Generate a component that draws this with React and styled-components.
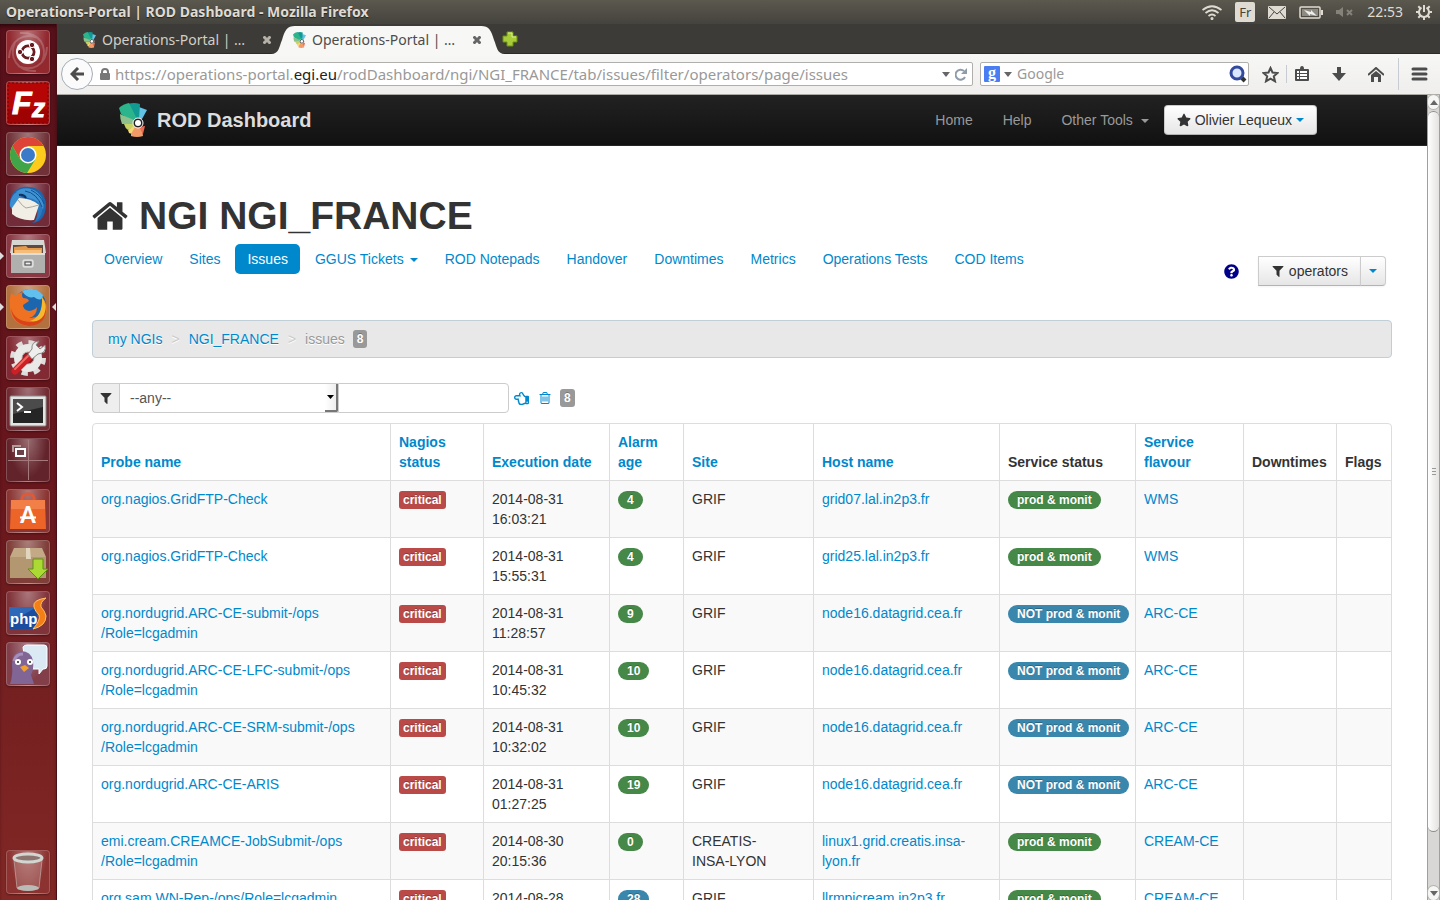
import React from "react";
import styled, { createGlobalStyle, css } from "styled-components";
import { FaStar, FaQuestionCircle, FaRegHandPointLeft } from "react-icons/fa";

const link = "#0088cc";
const uiFont = '"Noto Sans", "Open Sans", sans-serif';

const GlobalStyle = createGlobalStyle`
  * { box-sizing: border-box; }
  body {
    margin: 0;
    overflow: hidden;
    background: #fff;
    color: #333;
    font: 14px/20px "Liberation Sans", Helvetica, Arial, sans-serif;
  }
  a { color: ${link}; text-decoration: none; }
  button { font: inherit; cursor: pointer; }
  svg { display: block; flex: none; }
`;

/* ---------- desktop ---------- */

const Desktop = styled.div`
  display: flex;
  flex-direction: column;
  height: 100vh;
`;

const Panel = styled.header`
  display: flex;
  align-items: center;
  justify-content: space-between;
  flex: none;
  height: 24px;
  padding: 0 8px 0 6px;
  background: linear-gradient(#5b584e, #44433d);
  color: #dfdbd2;
  font: 14px/24px ${uiFont};
`;

const PanelTitle = styled.strong`
  font: 700 14px/24px ${uiFont};
  text-shadow: 0 1px 1px #222;
`;

const Indicators = styled.div`
  display: flex;
  align-items: center;
  gap: 13px;
`;

const Keyboard = styled.span`
  width: 20px;
  height: 20px;
  border-radius: 2px;
  background: #dfdbd2;
  color: #44433d;
  font-size: 13px;
  line-height: 20px;
  text-align: center;
`;

const Workspace = styled.div`
  display: flex;
  flex: 1;
  min-height: 0;
`;

const Launcher = styled.nav`
  display: flex;
  flex-direction: column;
  align-items: center;
  gap: 7px;
  flex: none;
  width: 57px;
  padding: 6px 1px 6px 0;
  background: linear-gradient(#57101a, #67161c 50%, #812825);
  border-right: 1px solid #4a0f17;
  box-shadow: inset 0 4px 4px -2px #2b060b;
  &> :last-child { margin-top: auto; }
`;

const Tile = styled.button`
  position: relative;
  flex: none;
  width: 44px;
  height: 44px;
  padding: 0;
  border: 1px solid rgba(255, 255, 255, 0.2);
  border-radius: 4px;
  background: radial-gradient(ellipse at 50% 0, rgba(255, 255, 255, 0.36), rgba(255, 255, 255, 0.04) 65%), ${(p) => p.$tone || "transparent"};
  box-shadow: 0 1px 2px rgba(0, 0, 0, 0.35);
  svg { margin: -1px; }
  ${(p) => p.$running && css`
    &::before {
      content: "";
      position: absolute;
      left: -7px;
      top: 17px;
      border: 4px solid transparent;
      border-left-color: #ddd;
      border-right: 0;
    }
  `}
  ${(p) => p.$focused && css`
    &::after {
      content: "";
      position: absolute;
      right: -7px;
      top: 17px;
      border: 4px solid transparent;
      border-right-color: #ddd;
      border-left: 0;
    }
  `}
`;

/* ---------- browser ---------- */

const Browser = styled.div`
  display: flex;
  flex-direction: column;
  flex: 1;
  min-width: 0;
`;

const TabStrip = styled.div`
  display: flex;
  align-items: flex-end;
  flex: none;
  height: 30px;
  padding-left: 16px;
  background: #3c3b37;
  border-bottom: 1px solid #2b2a27;
`;

const Tab = styled.div`
  position: relative;
  isolation: isolate;
  display: flex;
  align-items: center;
  width: 210px;
  height: 28px;
  margin-bottom: -1px;
  padding: 0 12px 0 10px;
  color: ${(p) => (p.$active ? "#4c4c4c" : "#d3cfc6")};
  font: 14px/28px ${uiFont};
  ${(p) => p.$active && css`background: linear-gradient(#f7f7f6, #f7f7f6) center / 188px 100% no-repeat;`}
`;

const TabTitle = styled.span`
  flex: 1;
  margin-left: 6px;
  white-space: nowrap;
`;

const TabEdge = styled.svg`
  position: absolute;
  z-index: -1;
  bottom: 0;
  ${(p) => (p.$right ? "left: 100%; margin-left: -12px;" : "right: 100%; margin-right: -12px;")}
`;

const PlainButton = styled.button`
  display: flex;
  align-items: center;
  justify-content: center;
  flex: none;
  padding: 0;
  border: 0;
  background: none;
  color: inherit;
`;

const CloseButton = styled(PlainButton)`
  color: ${(p) => (p.$active ? "#666" : "#b5b1a8")};
`;

const NewTab = styled(PlainButton)`
  align-self: center;
  margin-left: 9px;
`;

const Toolbar = styled.div`
  display: flex;
  align-items: center;
  flex: none;
  height: 41px;
  padding: 0 8px 0 4px;
  background: linear-gradient(#f7f7f6, #efeeed);
  border-bottom: 1px solid #aaa9a5;
  color: #4c4c4c;
`;

const Back = styled(PlainButton)`
  position: relative;
  z-index: 1;
  width: 32px;
  height: 32px;
  border: 1px solid #a3adb8;
  border-radius: 50%;
  background: #fbfbfb;
`;

const Field = styled.div`
  display: flex;
  align-items: center;
  height: 24px;
  border: 1px solid #b0afab;
  border-radius: 2px;
  background: #fff;
  color: #999;
  font: 14px/22px ${uiFont};
`;

const UrlField = styled(Field)`
  flex: 1;
  min-width: 0;
  gap: 5px;
  margin-left: -6px;
  padding: 0 4px 0 12px;
  font-size: 15px;
`;

const Url = styled.a`
  flex: 1;
  overflow: hidden;
  color: #999;
  white-space: nowrap;
  b { color: #222; font-weight: 400; }
`;

const SearchField = styled(Field)`
  width: 269px;
  margin-left: 7px;
  padding: 0 1px 0 3px;
  gap: 4px;
`;

const SearchInput = styled.input`
  flex: 1;
  min-width: 0;
  padding: 0 0 0 1px;
  border: 0;
  outline: 0;
  background: none;
  font: 14px/20px ${uiFont};
  &::placeholder { color: #999; opacity: 1; }
`;

const Tools = styled.div`
  display: flex;
  align-items: center;
  gap: 22px;
  margin-left: 13px;
`;

const ToolGroup = styled.div`
  display: flex;
  align-items: center;
  gap: 7px;
`;

const MenuGroup = styled(ToolGroup)`
  margin-left: -8px;
`;

const Divider = styled.span`
  width: 1px;
  height: ${(p) => (p.$tall ? 32 : 18)}px;
  background: #c6ccd2;
`;

const Viewport = styled.div`
  display: flex;
  flex: 1;
  min-height: 0;
`;

const Page = styled.div`
  flex: 1;
  min-width: 0;
  overflow: hidden;
  background: #fff;
`;

const ScrollBar = styled.div`
  display: flex;
  flex-direction: column;
  flex: none;
  width: 13px;
  border: solid #a19f9b;
  border-width: 0 1px;
  background: #d8d7d5;
`;

const ScrollEnd = styled(PlainButton)`
  height: 14px;
  border-radius: 6px;
  background: #f6f6f5;
  box-shadow: 0 0 0 1px #b5b3af;
`;

const Thumb = styled.div`
  display: flex;
  flex-direction: column;
  align-items: center;
  justify-content: center;
  gap: 2px;
  flex: 1;
  margin: 2px 0 54px;
  border: solid #8f8d89;
  border-width: 1px 0;
  border-radius: 6px;
  background: linear-gradient(90deg, #fff, #e3e2e0);
  i { width: 4px; height: 1px; background: #999; }
`;

/* ---------- dashboard ---------- */

const Navbar = styled.header`
  display: flex;
  align-items: center;
  justify-content: space-between;
  height: 51px;
  padding: 0 110px 0 62px;
  background: linear-gradient(#222, #111);
  border-bottom: 1px solid #252525;
`;

const Brand = styled.a`
  display: flex;
  align-items: center;
  gap: 10px;
  color: #ddd;
  font-size: 20px;
  font-weight: 700;
`;

const NavLinks = styled.nav`
  display: flex;
  align-items: center;
  gap: 30px;
  a { color: #999; }
`;

const Caret = styled.span`
  display: inline-block;
  margin-left: ${(p) => p.$gap || 0}px;
  vertical-align: middle;
  border: 4px solid transparent;
  border-top-color: ${(p) => p.$color || link};
  border-bottom: 0;
`;

const Button = styled.button`
  display: flex;
  align-items: center;
  gap: 4px;
  height: 30px;
  padding: 0 12px;
  border: 1px solid #ccc;
  border-bottom-color: #b3b3b3;
  border-radius: ${(p) => p.$radius || "4px"};
  background: linear-gradient(#fff, #e6e6e6);
  color: #333;
  box-shadow: 0 1px 2px rgba(0, 0, 0, 0.05);
`;

const UserButton = styled(Button)`
  margin-left: -15px;
`;

const Main = styled.main`
  padding: 50px 35px 0;
`;

const Title = styled.h1`
  display: flex;
  align-items: center;
  gap: 11px;
  margin: 0 0 8px;
  font-size: 39px;
  line-height: 40px;
`;

const SubNav = styled.div`
  display: flex;
  justify-content: space-between;
  align-items: flex-start;
  margin-bottom: 34px;
`;

const Pills = styled.nav`
  display: flex;
  gap: 3px;
`;

const Pill = styled.a`
  padding: 5px 12px;
  border-radius: 5px;
  white-space: nowrap;
  ${(p) => p.$active && css`background: ${link}; color: #fff;`}
`;

const Scope = styled.div`
  display: flex;
  align-items: center;
  margin: 12px 6px 0 0;
  color: #00008b;
  &> svg { margin-right: 19px; }
`;

const ScopeToggle = styled(Button)`
  margin-left: -1px;
  padding: 0 8px;
`;

const Breadcrumb = styled.ol`
  display: flex;
  align-items: center;
  gap: 9px;
  height: 38px;
  margin: 0 0 25px;
  padding: 0 15px;
  list-style: none;
  border: 1px solid #c0ced8;
  border-radius: 4px;
  background: #e8e8e8;
  color: #999;
  text-shadow: 0 1px 0 #fff;
`;

const Sep = styled.li`
  color: #ccc;
`;

const Current = styled.li`
  display: flex;
  align-items: center;
  gap: 8px;
`;

const Label = styled.span`
  display: inline-block;
  padding: 2px ${(p) => (p.$round ? 9 : 4)}px;
  border-radius: ${(p) => (p.$round ? 9 : 3)}px;
  background: ${(p) => p.$bg || "#999"};
  color: #fff;
  font-size: 12px;
  font-weight: 700;
  line-height: 14px;
  text-shadow: 0 -1px 0 rgba(0, 0, 0, 0.25);
  white-space: nowrap;
`;

const Filter = styled.form`
  display: flex;
  align-items: center;
  gap: 8px;
  margin-bottom: 10px;
`;

const FilterFields = styled.div`
  display: flex;
  margin-right: -3px;
`;

const AddOn = styled.label`
  display: flex;
  align-items: center;
  justify-content: center;
  width: 27px;
  height: 30px;
  border: 1px solid #ccc;
  border-right: 0;
  border-radius: 4px 0 0 4px;
  background: #eee;
`;

const SelectBox = styled.div`
  display: flex;
  width: 219px;
  height: 30px;
  border: 1px solid #ccc;
  border-right: 0;
  background: #fff;
`;

const Select = styled.select`
  flex: 1;
  padding: 0 10px;
  appearance: none;
  border: 0;
  outline: 0;
  background: none;
  color: #555;
  font: inherit;
`;

const SelectArrow = styled.span`
  display: flex;
  align-items: center;
  justify-content: center;
  width: 13px;
  margin-left: -13px;
  border: solid #777;
  border-width: 0 2px 2px 0;
  border-radius: 0 0 2px 0;
  background: linear-gradient(90deg, #fff, #eee);
  pointer-events: none;
`;

const TextInput = styled.input`
  width: 171px;
  height: 30px;
  padding: 4px 6px;
  border: 1px solid #ccc;
  border-radius: 0 4px 4px 0;
  font: inherit;
`;

const IconButton = styled(PlainButton)`
  width: 15px;
  color: ${link};
`;

const Table = styled.table`
  width: 100%;
  table-layout: fixed;
  border: 1px solid #ddd;
  border-collapse: separate;
  border-spacing: 0;
  border-radius: 4px;
  th, td {
    padding: 8px;
    border-left: 1px solid #ddd;
    text-align: left;
    white-space: nowrap;
  }
  th { vertical-align: bottom; }
  td {
    height: 57px;
    border-top: 1px solid #ddd;
    vertical-align: top;
  }
  tr > :first-child { border-left: 0; }
  tbody tr:nth-child(odd) td { background: #f9f9f9; }
`;

const Col = styled.col`
  width: ${(p) => p.$w}px;
`;

/* ---------- drawings ---------- */

const FA = {
  home: "M1472 992v480q0 26-19 45t-45 19h-384v-384h-256v384h-384q-26 0-45-19t-19-45v-480q0-1 .5-3t.5-3l575-474 575 474q1 2 1 6zm223-69l-62 74q-8 9-21 11h-3q-13 0-21-7l-692-577-692 577q-12 8-24 7-13-2-21-11l-62-74q-8-10-7-23.5t11-21.5l719-599q32-26 76-26t76 26l244 204v-195q0-14 9-23t23-9h192q14 0 23 9t9 23v408l219 182q10 8 11 21.5t-7 23.5z",
  filter: "M1595 295q17 41-14 70l-493 493v742q0 42-39 59-13 5-25 5-27 0-45-19l-256-256q-19-19-19-45v-486l-493-493q-31-29-14-70 17-39 59-39h1280q42 0 59 39z",
  trash: "M704 736v576q0 14-9 23t-23 9h-64q-14 0-23-9t-9-23v-576q0-14 9-23t23-9h64q14 0 23 9t9 23zm256 0v576q0 14-9 23t-23 9h-64q-14 0-23-9t-9-23v-576q0-14 9-23t23-9h64q14 0 23 9t9 23zm256 0v576q0 14-9 23t-23 9h-64q-14 0-23-9t-9-23v-576q0-14 9-23t23-9h64q14 0 23 9t9 23zm128 724v-948h-896v948q0 22 7 40.5t14.5 27 10.5 8.5h832q3 0 10.5-8.5t14.5-27 7-40.5zm-672-1076h448l-48-117q-7-9-17-11h-317q-10 2-17 11zm928 32v64q0 14-9 23t-23 9h-96v948q0 83-47 143.5t-113 60.5h-832q-66 0-113-58.5t-47-141.5v-952h-96q-14 0-23-9t-9-23v-64q0-14 9-23t23-9h309l70-167q15-37 54-63t79-26h320q40 0 79 26t54 63l70 167h309q14 0 23 9t9 23z",
};

const Fa = ({ name, size = 14, box = "0 0 1792 1792" }) => (
  <svg width={size} height={size} viewBox={box} fill="currentColor" aria-hidden="true"><path d={FA[name]} /></svg>
);

const EgiLogo = ({ w = 28, h = 34 }) => (
  <svg width={w} height={h} viewBox="0 0 28 34" aria-hidden="true">
    <path d="M20 4L28 7 23 16H18Z" fill="#62c3e6" />
    <path d="M9 1Q15-1 21 1L20 16 15 17Z" fill="#119a92" />
    <path d="M0 5Q4 1 10 0L18 16 13 18 2 11Z" fill="#2bb58c" />
    <path d="M1 11L15 17 14 21 3 21Q1 16 1 11Z" fill="#8cc08c" />
    <path d="M5 21H14L16 23 9 27Q6 25 5 21Z" fill="#c6d264" />
    <path d="M9 27L16 22 17 25 13 31 10 30Z" fill="#f5d974" />
    <path d="M16 24L23 25 24 33Q18 35 12 33V31Z" fill="#f29a68" />
    <path d="M20 24L26 23 24 31Z" fill="#ee6a50" />
    <circle cx="19" cy="20" r="5" fill="#222" stroke="#fff" strokeWidth="1" />
    <circle cx="19" cy="20" r="3" fill="#fff" />
  </svg>
);

const CloseIcon = () => (
  <svg width="8" height="8" viewBox="0 0 8 8" stroke="currentColor" strokeWidth="3"><path d="M0.500 0.500l7 7M7.500 0.500l-7 7" /></svg>
);

const Triangle = ({ up }) => (
  <svg width="8" height="5" viewBox="0 0 8 5" fill="#666"><path d={up ? "M0 5L4 0 8 5Z" : "M0 0H8L4 5Z"} /></svg>
);

const UbuntuIcon = () => (
  <svg width="44" height="44" viewBox="0 0 44 44">
    <g fill="none" stroke="#fff" strokeOpacity=".2" strokeWidth="2">
      <path d="M3 28C4 10 18 2 32 8M14 3C34 2 42 16 36 32M41 17C40 36 26 42 12 36M30 41C12 42 2 28 9 12" />
    </g>
    <circle cx="22" cy="22" r="12" fill="#fff" />
    <circle cx="22" cy="22" r="6" fill="none" stroke="#6b1b1f" strokeWidth="3" />
    <path d="M22 22L12 22M22 22L27 13M22 22L27 31" stroke="#fff" strokeWidth="1.500" />
    <circle cx="22" cy="22" r="4.500" fill="#fff" />
    <g fill="#6b1b1f" stroke="#fff"><circle cx="14" cy="22" r="2.700" /><circle cx="26" cy="15" r="2.700" /><circle cx="26" cy="29" r="2.700" /></g>
  </svg>
);

const FileZillaIcon = () => (
  <svg width="44" height="44" viewBox="0 0 44 44">
    <rect x="2" y="2" width="40" height="40" fill="#b50505" stroke="#5d0a0c" strokeDasharray="2 2" />
    <path d="M2 28H42V42H2Z" fill="#8f0000" opacity=".6" />
    <text x="6" y="33" fill="#fff" stroke="#fff" fontFamily="Liberation Sans" fontWeight="700" fontStyle="italic" fontSize="32">F</text>
    <text x="26" y="36" fill="#fff" stroke="#fff" fontFamily="Liberation Sans" fontWeight="700" fontStyle="italic" fontSize="26">z</text>
  </svg>
);

const ChromeIcon = () => (
  <svg width="44" height="44" viewBox="0 0 44 44">
    <circle cx="22" cy="23" r="18" fill="#fccb1c" />
    <path d="M6.400 14A18 18 0 0 1 37.600 14H22L14 27Z" fill="#dd4437" />
    <path d="M6.400 14A18 18 0 0 0 21 41L29 28 14.200 27.500Z" fill="#3fa548" />
    <circle cx="22" cy="23" r="8.500" fill="#fff" />
    <circle cx="22" cy="23" r="7" fill="#3b7ac8" />
  </svg>
);

const ThunderbirdIcon = () => (
  <svg width="44" height="44" viewBox="0 0 44 44">
    <path d="M4 24C2 12 12 2 23 4C35 4 43 16 39 29C37 36 32 40 26 40C32 36 34 30 32 24L12 12Z" fill="#1e65ae" />
    <path d="M19 8C33 8 38 18 36 29Q34 36 29 39C33 30 33 20 24 16Z" fill="#2b78bf" />
    <path d="M10 9C14 5 24 3 31 9C36 13 39 20 37 27C35 20 30 16 22 15C18 14 15 12 10 9Z" fill="#3f93d3" />
    <path d="M4 23C4 15 8 9 14 8C12 11 13 13 17 15L9 22 6 27Z" fill="#3b8ed0" />
    <path d="M6 25L13 15Q25 15 33 22L28 37Q14 38 6 31Z" fill="#f1eee6" />
    <path d="M12 17Q17 24 20 25Q26 24 33 22" fill="none" stroke="#aaa69b" />
    <path d="M19 8Q31 10 36 24M25 7Q35 12 38 21" fill="none" stroke="#134e8f" />
    <path d="M13 12Q18 11 20 15" fill="none" stroke="#0c3562" strokeWidth="2" />
  </svg>
);

const FilesIcon = () => (
  <svg width="44" height="44" viewBox="0 0 44 44">
    <path d="M6 6H38L40 19H4Z" fill="#d6d6d3" />
    <path d="M7 11H37V19H7Z" fill="#5c4b42" />
    <path d="M8 13L20 12 22 14H36V19H8Z" fill="#e89a4b" />
    <path d="M9 16H35V19H9Z" fill="#f5bd78" />
    <path d="M5 19H39V39H5Z" fill="#b0b0ae" />
    <path d="M5 19H39V21H5Z" fill="#dededb" />
    <rect x="17" y="26" width="10" height="7" rx="1" fill="#c9c9c7" stroke="#eee" />
    <rect x="19" y="28" width="6" height="3" fill="#eee" stroke="#444" />
  </svg>
);

const FirefoxIcon = () => (
  <svg width="44" height="44" viewBox="0 0 44 44">
    <circle cx="24" cy="20" r="16" fill="#1c66b0" />
    <path d="M16 6Q28 0 37 10Q36 18 28 12Q21 14 16 6Z" fill="#61c0ee" />
    <path d="M5 8Q8 11 11 10Q14 7 17 7Q15 10 17 13Q22 13 23 16L17 20Q17 25 23 26Q29 25 31 22Q31 31 23 33Q34 34 38 22Q38 15 36 12Q43 20 40 29Q35 41 22 41Q5 39 4 23Q3 15 5 8Z" fill="#ee7222" />
    <path d="M5 23Q8 36 24 37Q38 35 40 22Q41 40 23 41Q6 39 5 23Z" fill="#d9431a" />
    <path d="M36 12Q42 20 38 30Q33 38 24 36Q37 32 36 12Z" fill="#f8b82c" />
  </svg>
);

const SettingsIcon = () => (
  <svg width="44" height="44" viewBox="0 0 44 44">
    <circle cx="22" cy="22" r="15" fill="none" stroke="#dddddb" strokeWidth="6" strokeDasharray="6 5.780" />
    <circle cx="22" cy="22" r="10" fill="none" stroke="#e9e9e7" strokeWidth="8" />
    <circle cx="22" cy="22" r="6" fill="#861f27" stroke="#b3b3b1" />
    <path d="M9 35L24 20" stroke="#cd1f24" strokeWidth="7" strokeLinecap="round" />
    <path d="M9 33L22 20" stroke="#ef6b64" strokeWidth="2" strokeLinecap="round" />
    <path d="M22 18L26 13Q25 6 33 5L30 9 34 13 39 9Q41 17 32 18L26 23Z" fill="#eeeeec" stroke="#888" />
  </svg>
);

const TerminalIcon = () => (
  <svg width="44" height="44" viewBox="0 0 44 44">
    <rect x="4" y="9" width="36" height="30" rx="1" fill="#e4e4e2" stroke="#8c8c8a" />
    <rect x="7" y="12" width="30" height="24" fill="#252525" />
    <path d="M7 12H37V20L7 27Z" fill="#4b4b4b" />
    <path d="M11 16L16 20 11 24M18 25H25" fill="none" stroke="#fff" strokeWidth="2" />
  </svg>
);

const WorkspaceIcon = () => (
  <svg width="44" height="44" viewBox="0 0 44 44" fill="none">
    <path d="M2 22.500H42M22.500 2V42" stroke="#a5787c" />
    <path d="M7 14V8H15" stroke="#b79a9c" strokeWidth="2" />
    <rect x="10" y="11" width="9" height="7" fill="#6b4247" stroke="#fff" strokeWidth="2" />
  </svg>
);

const SoftwareIcon = () => (
  <svg width="44" height="44" viewBox="0 0 44 44">
    <path d="M16 14V9Q17 5 22 5Q27 5 28 9V14" fill="none" stroke="#dd5a39" strokeWidth="3" />
    <path d="M5 11H39L40 40H4Z" fill="#ec6427" />
    <path d="M5 11H39V20H5Z" fill="#f58a55" opacity=".7" />
    <text x="22" y="34" textAnchor="middle" fill="#fff" fontFamily="Lato" fontWeight="900" fontSize="22">A</text>
    <path d="M14 28.500H30" stroke="#fff" strokeWidth="2" />
  </svg>
);

const UpdaterIcon = () => (
  <svg width="44" height="44" viewBox="0 0 44 44">
    <path d="M8 8H36L40 17H4Z" fill="#c3a985" />
    <path d="M4 17H40V38H4Z" fill="#b29770" />
    <path d="M20 8H24L25 19H20Z" fill="#e2d5be" />
    <path d="M27 19H37V29H42L32 39 22 29H27Z" fill="#aada33" stroke="#5f9110" />
  </svg>
);

const PhpStormIcon = () => (
  <svg width="44" height="44" viewBox="0 0 44 44">
    <path d="M3 16H31V38H3Z" fill="#1a4c9f" />
    <path d="M3 16H31L3 32Z" fill="#3c7bc9" opacity=".6" />
    <path d="M40 7Q26 9 28 16Q29 20 33 24Q35 29 27 38Q40 35 40 25Q39 20 35 16Q34 11 40 7Z" fill="#f57f17" stroke="#ffc163" />
    <text x="4" y="33" fill="#fff" fontFamily="Liberation Sans" fontWeight="700" fontSize="15">php</text>
  </svg>
);

const PidginIcon = () => (
  <svg width="44" height="44" viewBox="0 0 44 44">
    <path d="M17 5Q18 3 21 3H38Q41 3 41 6V24Q41 27 38 27H37L33 32V27H20Z" fill="#dbe9f5" stroke="#fff" />
    <path d="M4 42Q7 34 6 22Q6 11 15 9Q25 9 27 19Q28 27 25 33L28 42Z" fill="#806595" />
    <path d="M8 19Q10 12 17 12" fill="none" stroke="#a78fba" strokeWidth="3" />
    <g fill="#fff"><circle cx="12" cy="20" r="3" /><circle cx="24" cy="20" r="3" /></g>
    <g fill="#222"><circle cx="12" cy="20" r="1" /><circle cx="24" cy="20" r="1" /></g>
    <path d="M14 25L19 23 23 26 18 30Z" fill="#f3a02b" />
  </svg>
);

const TrashIcon = () => (
  <svg width="44" height="44" viewBox="0 0 44 44">
    <path d="M8 9H36L33 39Q22 43 11 39Z" fill="#c9a09c" opacity=".35" />
    <path d="M8 10L11 38M36 10L33 38" stroke="#c5aaa6" opacity=".7" />
    <ellipse cx="22" cy="38" rx="11" ry="3" fill="#b9bcb6" />
    <ellipse cx="22" cy="8" rx="14" ry="4" fill="#8c7571" stroke="#d3d5d0" strokeWidth="3" />
  </svg>
);

const apps = [
  ["Dash", UbuntuIcon, "#8c2027"],
  ["FileZilla", FileZillaIcon, "#a50d0d"],
  ["Chrome", ChromeIcon, "#6a2a30"],
  ["Thunderbird", ThunderbirdIcon, "#6b2231"],
  ["Files", FilesIcon, "#85303c", true],
  ["Firefox", FirefoxIcon, "#b06b37", true, true],
  ["Settings", SettingsIcon, "#7d212b"],
  ["Terminal", TerminalIcon, "#6b222a"],
  ["Workspaces", WorkspaceIcon, "#5d1a22"],
  ["Software Centre", SoftwareIcon, "#852d2b"],
  ["Updater", UpdaterIcon, "#7a3630"],
  ["PhpStorm", PhpStormIcon, "#7b2b31"],
  ["Pidgin", PidginIcon, "#7d3743"],
  ["Trash", TrashIcon, "#872a29"],
];

const green = "#468847";
const blue = "#3a87ad";
const rows = [
  [["org.nagios.GridFTP-Check"], "2014-08-31", "16:03:21", 4, ["GRIF"], ["grid07.lal.in2p3.fr"], true, "WMS"],
  [["org.nagios.GridFTP-Check"], "2014-08-31", "15:55:31", 4, ["GRIF"], ["grid25.lal.in2p3.fr"], true, "WMS"],
  [["org.nordugrid.ARC-CE-submit-/ops", "/Role=lcgadmin"], "2014-08-31", "11:28:57", 9, ["GRIF"], ["node16.datagrid.cea.fr"], false, "ARC-CE"],
  [["org.nordugrid.ARC-CE-LFC-submit-/ops", "/Role=lcgadmin"], "2014-08-31", "10:45:32", 10, ["GRIF"], ["node16.datagrid.cea.fr"], false, "ARC-CE"],
  [["org.nordugrid.ARC-CE-SRM-submit-/ops", "/Role=lcgadmin"], "2014-08-31", "10:32:02", 10, ["GRIF"], ["node16.datagrid.cea.fr"], false, "ARC-CE"],
  [["org.nordugrid.ARC-CE-ARIS"], "2014-08-31", "01:27:25", 19, ["GRIF"], ["node16.datagrid.cea.fr"], false, "ARC-CE"],
  [["emi.cream.CREAMCE-JobSubmit-/ops", "/Role=lcgadmin"], "2014-08-30", "20:15:36", 0, ["CREATIS-", "INSA-LYON"], ["linux1.grid.creatis.insa-", "lyon.fr"], true, "CREAM-CE"],
  [["org.sam.WN-Rep-/ops/Role=lcgadmin"], "2014-08-28", "", 28, ["GRIF"], ["llrmpicream.in2p3.fr"], true, "CREAM-CE"],
];

const columns = [
  [["Probe name"], true],
  [["Nagios", "status"], true],
  [["Execution date"], true],
  [["Alarm", "age"], true],
  [["Site"], true],
  [["Host name"], true],
  [["Service status"], false],
  [["Service", "flavour"], true],
  [["Downtimes"], false],
  [["Flags"], false],
];
const widths = [93, 126, 74, 130, 186, 136, 108, 93, 55];
const pills = ["Overview", "Sites", "Issues", "GGUS Tickets", "ROD Notepads", "Handover", "Downtimes", "Metrics", "Operations Tests", "COD Items"];

const Lines = ({ of }) => of.map((text, i) => <React.Fragment key={i}>{i > 0 && <br />}{text}</React.Fragment>);

function TopPanel() {
  return (
    <Panel>
      <PanelTitle>Operations-Portal | ROD Dashboard - Mozilla Firefox</PanelTitle>
      <Indicators>
        <svg width="20" height="15" viewBox="0 0 20 15" fill="none" stroke="#dfdbd2" strokeWidth="1.700">
          <path d="M0.500 5Q10-2.500 19.500 5M3.500 8Q10 2.500 16.500 8M6.500 11Q10 8 13.500 11" /><circle cx="10" cy="13.500" r=".7" />
        </svg>
        <Keyboard>Fr</Keyboard>
        <svg width="18" height="13" viewBox="0 0 18 13">
          <rect width="18" height="13" rx="1" fill="#dfdbd2" />
          <path d="M1 1L9 8 17 1M1 12L6 6M17 12L12 6" fill="none" stroke="#44433d" />
        </svg>
        <svg width="24" height="13" viewBox="0 0 24 13">
          <rect x="1" y="1" width="20" height="11" rx="1" fill="none" stroke="#dfdbd2" strokeWidth="1.500" />
          <rect x="3" y="3" width="16" height="7" fill="#8d8a82" />
          <path d="M22 4H24V9H22Z" fill="#dfdbd2" />
          <path d="M5 4L12 6 12 4 18 10 11 8 11 10Z" fill="#eee" />
        </svg>
        <svg width="18" height="12" viewBox="0 0 18 12">
          <path d="M0 4H3L7 1V11L3 8H0Z" fill="#85827a" />
          <path d="M11 4L16 9M16 4L11 9" stroke="#85827a" strokeWidth="2" />
        </svg>
        <time>22:53</time>
        <svg width="16" height="16" viewBox="0 0 16 16" fill="none" stroke="#dfdbd2" strokeWidth="2">
          <path d="M5.500 3.700A5 5 0 1 0 10.500 3.700M8 1V8" />
          <path d="M0 8H3M13 8H16M8 13V16M2.300 2.300L4.500 4.500M13.700 2.300L11.500 4.500M2.300 13.700L4.500 11.500M13.700 13.700L11.500 11.500" />
        </svg>
      </Indicators>
    </Panel>
  );
}

function BrowserTab({ active }) {
  return (
    <Tab $active={active}>
      <EgiLogo w={13} h={16} />
      <TabTitle>Operations-Portal | …</TabTitle>
      <CloseButton $active={active} aria-label="Close tab"><CloseIcon /></CloseButton>
      {active && (
        <>
          <TabEdge width="24" height="28" viewBox="0 0 24 28"><path d="M0 28C8 28 8 21 11 14C14 4 16 0 24 0V28Z" fill="#f7f7f6" /></TabEdge>
          <TabEdge $right width="24" height="28" viewBox="0 0 24 28"><path d="M0 0C8 0 10 4 13 14C16 21 16 28 24 28H0Z" fill="#f7f7f6" /></TabEdge>
        </>
      )}
    </Tab>
  );
}

function BrowserToolbar() {
  return (
    <Toolbar>
      <Back aria-label="Back">
        <svg width="14" height="14" viewBox="0 0 14 14" fill="none" stroke="#4c4c4c" strokeWidth="3"><path d="M8 1L2 7L8 13M2 7H14" /></svg>
      </Back>
      <UrlField>
        <svg width="10" height="12" viewBox="0 0 10 12"><path d="M2 6V4Q2 1 5 1Q8 1 8 4V6" fill="none" stroke="#777" strokeWidth="2" /><rect y="5" width="10" height="7" rx="1" fill="#777" /></svg>
        <Url href="#">https://operations-portal.<b>egi.eu</b>/rodDashboard/ngi/NGI_FRANCE/tab/issues/filter/operators/page/issues</Url>
        <Triangle />
        <svg width="13" height="13" viewBox="0 0 13 13"><path d="M10 9A5 5 0 1 1 9 3" fill="none" stroke="#8f9dab" strokeWidth="2" /><path d="M12 0V6H6Z" fill="#8f9dab" /></svg>
      </UrlField>
      <SearchField>
        <svg width="16" height="16" viewBox="0 0 16 16"><rect width="16" height="16" rx="1" fill="#4a7df2" /><text x="8" y="12" textAnchor="middle" fill="#fff" fontFamily="Liberation Serif" fontWeight="700" fontSize="16">g</text></svg>
        <Triangle />
        <SearchInput aria-label="Search" placeholder="Google" />
        <svg width="18" height="18" viewBox="0 0 18 18"><path d="M11 11L16 16" stroke="#333" strokeWidth="4" /><circle cx="8" cy="8" r="6" fill="#dce8ff" stroke="#344a9c" strokeWidth="3" /></svg>
      </SearchField>
      <Tools>
        <ToolGroup>
          <PlainButton aria-label="Bookmark"><svg width="17" height="17" viewBox="0 0 17 17" fill="none" stroke="#4c4c4c" strokeWidth="2"><path d="M8.500 2L10.500 6.500 15.500 7 11.800 10.300 13 15.300 8.500 12.700 4 15.300 5.200 10.300 1.500 7 6.500 6.500Z" /></svg></PlainButton>
          <Divider />
          <PlainButton aria-label="Bookmarks menu"><svg width="16" height="16" viewBox="0 0 16 16"><path d="M2 3H6Q6 0 8 0Q10 0 10 3H14Q15 3 15 4V14Q15 15 14 15H2Q1 15 1 14V4Q1 3 2 3Z" fill="#4c4c4c" /><path d="M3 6H5M6 6H13M3 9H5M6 9H13M3 12H5M6 12H13" stroke="#fff" strokeWidth="2" /></svg></PlainButton>
        </ToolGroup>
        <PlainButton aria-label="Downloads"><svg width="14" height="14" viewBox="0 0 14 14" fill="#4c4c4c"><path d="M5 0H9V6H14L7 14 0 6H5Z" /></svg></PlainButton>
        <PlainButton aria-label="Home"><svg width="16" height="15" viewBox="0 0 16 15"><path d="M0 8L8 1L16 8" fill="none" stroke="#4c4c4c" strokeWidth="2" /><path d="M3 8L8 4 13 8V15H10V10H6V15H3Z" fill="#4c4c4c" /></svg></PlainButton>
        <MenuGroup>
          <Divider $tall />
          <PlainButton aria-label="Menu"><svg width="26" height="14" viewBox="0 0 26 14" stroke="#4c4c4c" strokeWidth="3" strokeLinecap="round"><path d="M7 2H20M7 7H20M7 12H20" /></svg></PlainButton>
        </MenuGroup>
      </Tools>
    </Toolbar>
  );
}

function IssuesTable() {
  return (
    <Table>
      <colgroup><col />{widths.map((w, i) => <Col key={i} $w={w} />)}</colgroup>
      <thead>
        <tr>{columns.map(([lines, sortable]) => (
          <th key={lines[0] + lines.length} scope="col">{sortable ? <a href="#"><Lines of={lines} /></a> : <Lines of={lines} />}</th>
        ))}</tr>
      </thead>
      <tbody>
        {rows.map(([probe, date, time, age, site, host, prod, flavour], i) => (
          <tr key={i}>
            <td><a href="#"><Lines of={probe} /></a></td>
            <td><Label $bg="#b94a48">critical</Label></td>
            <td>{date}<br />{time}</td>
            <td><Label $round $bg={age > 20 ? blue : green}>{age}</Label></td>
            <td><Lines of={site} /></td>
            <td><a href="#"><Lines of={host} /></a></td>
            <td><Label $round $bg={prod ? green : blue}>{prod ? "prod & monit" : "NOT prod & monit"}</Label></td>
            <td><a href="#">{flavour}</a></td>
            <td />
            <td />
          </tr>
        ))}
      </tbody>
    </Table>
  );
}

function Dashboard() {
  return (
    <Page>
      <Navbar>
        <Brand href="#"><EgiLogo />ROD Dashboard</Brand>
        <NavLinks>
          <a href="#">Home</a>
          <a href="#">Help</a>
          <a href="#">Other Tools <Caret $gap={4} $color="#999" /></a>
          <UserButton><FaStar size={14} />Olivier Lequeux<Caret /></UserButton>
        </NavLinks>
      </Navbar>
      <Main>
        <Title><Fa name="home" size={36} box="64 64 1664 1664" />NGI NGI_FRANCE</Title>
        <SubNav>
          <Pills>
            {pills.map((name) => (
              <Pill key={name} href="#" $active={name === "Issues"}>{name}{name === "GGUS Tickets" && <Caret $gap={6} />}</Pill>
            ))}
          </Pills>
          <Scope>
            <FaQuestionCircle size={15} />
            <Button $radius="0"><Fa name="filter" />operators</Button>
            <ScopeToggle aria-label="Choose scope" $radius="0 4px 4px 0"><Caret /></ScopeToggle>
          </Scope>
        </SubNav>
        <Breadcrumb>
          <li><a href="#">my NGIs</a></li>
          <Sep>&gt;</Sep>
          <li><a href="#">NGI_FRANCE</a></li>
          <Sep>&gt;</Sep>
          <Current>issues <Label>8</Label></Current>
        </Breadcrumb>
        <Filter>
          <FilterFields>
            <AddOn htmlFor="field" aria-label="Filter by"><Fa name="filter" /></AddOn>
            <SelectBox>
              <Select id="field"><option>--any--</option></Select>
              <SelectArrow><svg width="7" height="4" viewBox="0 0 7 4"><path d="M0 0H7L3.500 4Z" /></svg></SelectArrow>
            </SelectBox>
            <TextInput aria-label="Filter value" />
          </FilterFields>
          <IconButton type="button" aria-label="Apply"><FaRegHandPointLeft size={15} /></IconButton>
          <IconButton type="button" aria-label="Clear"><Fa name="trash" /></IconButton>
          <Label>8</Label>
        </Filter>
        <IssuesTable />
      </Main>
    </Page>
  );
}

export default function App() {
  return (
    <Desktop>
      <GlobalStyle />
      <TopPanel />
      <Workspace>
        <Launcher>
          {apps.map(([name, Icon, tone, running, focused]) => (
            <Tile key={name} aria-label={name} $tone={tone} $running={running} $focused={focused}><Icon /></Tile>
          ))}
        </Launcher>
        <Browser>
          <TabStrip>
            <BrowserTab />
            <BrowserTab active />
            <NewTab aria-label="New tab">
              <svg width="16" height="16" viewBox="0 0 16 16"><path d="M5 1H11V5H15V11H11V15H5V11H1V5H5Z" fill="#a8cb38" stroke="#6d9216" /><path d="M6 2H10V6H14" fill="none" stroke="#dcee9a" /></svg>
            </NewTab>
          </TabStrip>
          <BrowserToolbar />
          <Viewport>
            <Dashboard />
            <ScrollBar>
              <ScrollEnd aria-label="Scroll up"><Triangle up /></ScrollEnd>
              <Thumb><i /><i /><i /></Thumb>
              <ScrollEnd aria-label="Scroll down"><Triangle /></ScrollEnd>
            </ScrollBar>
          </Viewport>
        </Browser>
      </Workspace>
    </Desktop>
  );
}
